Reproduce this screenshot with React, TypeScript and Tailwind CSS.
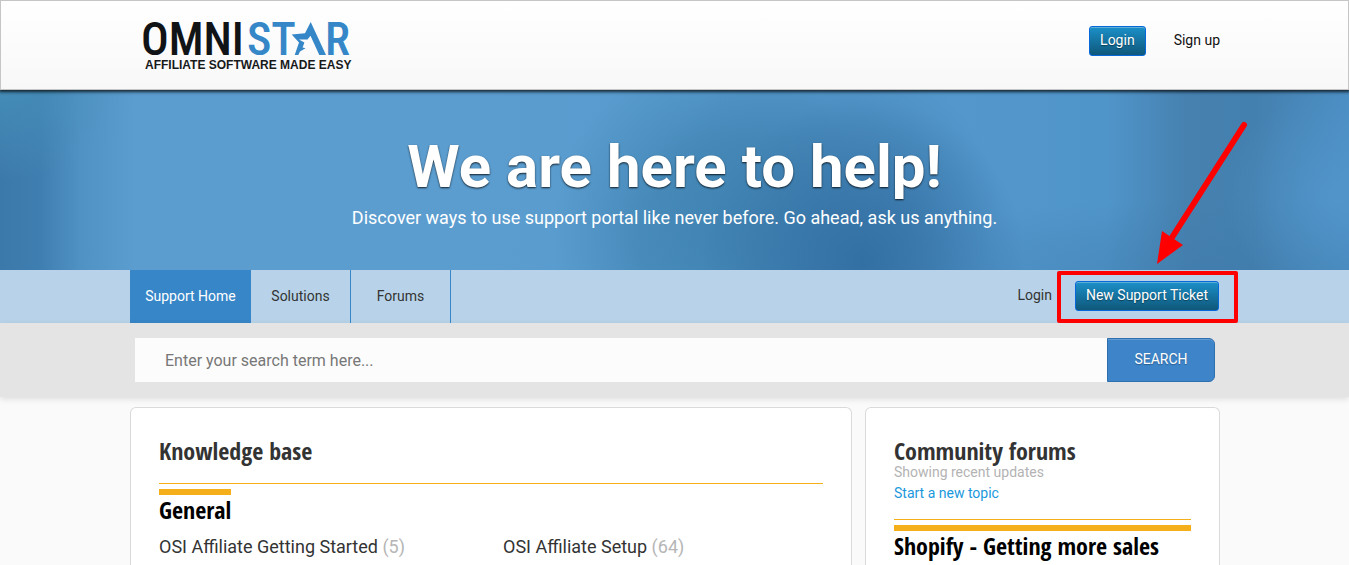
import type { ReactNode } from "react";

const tealButton =
  "block h-[30px] rounded-[3px] border border-[#0769d9] bg-linear-to-b from-[#1b90c9] to-[#0f587b] px-2.5 pb-0.5 text-sm leading-[24px] text-white shadow-[inset_0_1px_0_rgba(255,255,255,0.3)] text-shadow-[0_1px_1px_rgba(0,0,0,0.4)]";

function Container({ children, className = "" }: { children: ReactNode; className?: string }) {
  return <div className={`mx-auto w-full max-w-[1091px] pl-px ${className}`}>{children}</div>;
}

function Logo() {
  return (
    <svg viewBox="0 0 214 72" className="h-[72px] w-[214px]" role="img" aria-label="Omnistar">
      <g fontFamily="'Roboto Condensed', 'Liberation Sans', sans-serif" fontSize="46" fontWeight="500">
        <text x="-1" y="46" fill="#111416">OMNI</text>
        <text x="105" y="46" fill="#3687c8">ST</text>
        <text x="183" y="46" fill="#3687c8">R</text>
      </g>
      <path
        d="M149.7 25.5 163 24.2 168.7 13 184 46H177.3L168.5 26.8 165.5 30.5 157 30.5 162.4 33.6 160.6 38.4 163.5 39.2 158 42.5 156.3 46H152.7L157 33.4Z"
        fill="#3687c8"
      />
      <text
        x="3"
        y="60"
        fill="#17191b"
        fontFamily="'Liberation Sans', Arial, sans-serif"
        fontSize="12"
        fontWeight="700"
      >
        AFFILIATE SOFTWARE MADE EASY
      </text>
    </svg>
  );
}

function Header() {
  return (
    <header className="relative z-10 border border-[#c6c6c6] bg-linear-to-b from-white to-[#f8f8f8] shadow-[0_1px_3px_1px_rgba(0,0,0,0.75)]">
      <Container className="flex h-[88px] items-center justify-between">
        <a href="#home" className="ml-3">
          <Logo />
        </a>
        <div className="mb-2 flex items-center gap-7">
          <button type="button" className={tealButton}>Login</button>
          <a href="#signup" className="pb-0.5 text-sm text-[#111]">Sign up</a>
        </div>
      </Container>
    </header>
  );
}

function Hero() {
  return (
    <section className="flex flex-col items-center bg-[radial-gradient(ellipse_10%_50%_at_0%_0%,rgba(72,148,188,0.7)_0%,transparent_100%),linear-gradient(90deg,#3c79ab_0%,#3f7eb0_3%,rgba(70,135,185,0.5)_6%,transparent_10%),radial-gradient(ellipse_12%_90%_at_64%_95%,rgba(48,108,160,0.9)_0%,rgba(52,112,164,0.6)_45%,transparent_100%),radial-gradient(ellipse_12%_100%_at_53%_80%,rgba(62,130,176,0.8)_0%,rgba(62,130,176,0.65)_45%,transparent_100%),radial-gradient(ellipse_13%_85%_at_61%_65%,rgba(62,126,174,0.7)_0%,rgba(62,126,174,0.5)_50%,transparent_100%),radial-gradient(ellipse_8%_60%_at_99%_60%,rgba(84,152,206,0.7)_0%,transparent_100%),radial-gradient(ellipse_25%_40%_at_90%_100%,rgba(62,122,170,0.5)_0%,transparent_100%),linear-gradient(90deg,#5b9dcf_35%,#5296cb_75%,#5095ca_82%,#4681b0_88%,#4480af_93%,#4c8fc4_100%)] px-4 pt-[41px] pb-[39px] text-white">
      <h1 className="text-center text-[60px] leading-[72px] font-bold text-shadow-[0_1px_2px_rgba(0,0,0,0.8)]">
        We are here to help!
      </h1>
      <p className="mt-0.5 text-center text-[18px] leading-[26px]">
        Discover ways to use support portal like never before. Go ahead, ask us anything.
      </p>
    </section>
  );
}

function TicketCallout() {
  return (
    <>
      <div className="pointer-events-none absolute -top-[10px] -right-[19px] -bottom-[12px] -left-[18px] rounded-[2px] border-4 border-[#fe0000]" />
      <svg
        viewBox="0 0 100 150"
        className="pointer-events-none absolute bottom-[44px] left-[78px] h-[150px] w-[100px]"
        aria-hidden="true"
      >
        <path d="M91 8 18 122" stroke="#fe0000" strokeWidth="6" strokeLinecap="round" />
        <path d="M9 114 30 128 4 147Z" fill="#fe0000" />
      </svg>
    </>
  );
}

function NavBar() {
  return (
    <div className="bg-[#b8d3e9]">
      <Container className="flex items-center justify-between">
        <nav className="flex text-sm leading-[53px] text-[#333]">
          <a href="#support" className="w-[121px] bg-[#3786c7] text-center text-white">Support Home</a>
          <a href="#solutions" className="w-[100px] border-r border-[#3786c7] text-center">Solutions</a>
          <a href="#forums" className="w-[100px] border-r border-[#3786c7] text-center">Forums</a>
        </nav>
        <div className="mb-px flex items-center gap-[23px] pr-px">
          <a href="#login" className="pb-0.5 text-sm leading-5 text-[#333]">Login</a>
          <div className="relative">
            <button type="button" className={tealButton}>New Support Ticket</button>
            <TicketCallout />
          </div>
        </div>
      </Container>
    </div>
  );
}

function SearchBar() {
  return (
    <div className="bg-[#e4e4e4] py-[15px] shadow-[0_2px_6px_rgba(0,0,0,0.12)]">
      <Container>
        <form className="mx-[5px] flex" onSubmit={(e) => e.preventDefault()}>
          <input
            type="text"
            aria-label="Search"
            placeholder="Enter your search term here..."
            className="h-11 min-w-0 flex-1 bg-[#fcfcfc] px-[30px] text-base text-[#333] outline-none placeholder:text-[#777]"
          />
          <button
            type="submit"
            className="h-11 w-[108px] rounded-r-md border border-[#2e6fae] bg-[#3d84c9] pb-0.5 text-sm text-white shadow-[inset_0_1px_0_rgba(255,255,255,0.2)] text-shadow-[0_1px_1px_rgba(0,0,0,0.3)]"
          >
            SEARCH
          </button>
        </form>
      </Container>
    </div>
  );
}

const condensed = "font-['Open_Sans_Condensed','Roboto_Condensed',sans-serif] text-2xl leading-6 font-bold";

function Panel({ children }: { children: ReactNode }) {
  return (
    <section className="rounded-t-md border border-b-0 border-[#dadada] bg-white px-7 pt-[31px]">
      {children}
    </section>
  );
}

function TopicLink({ title, count }: { title: string; count: number }) {
  return (
    <a href="#topic" className="text-[18px] leading-[26px] text-[#333]">
      {title} <span className="text-[#b6b6b6]">({count})</span>
    </a>
  );
}

export default function App() {
  return (
    <div className="flex min-h-screen flex-col bg-[#fafafa] font-['Roboto','Liberation_Sans',sans-serif]">
      <Header />
      <Hero />
      <NavBar />
      <SearchBar />
      <main className="flex flex-1 flex-col">
        <Container className="grid flex-1 grid-cols-[722fr_355fr] gap-[13px] pt-[10px]">
          <Panel>
            <h2 className={`${condensed} text-[#333]`}>Knowledge base</h2>
            <div className="mt-5 border-t border-[#f4af1b] pt-[5px]">
              <h3 className={`${condensed} inline-block border-t-[6px] border-[#f4af1b] pt-[3px] align-top text-black`}>
                General
              </h3>
              <div className="mt-3 grid grid-cols-2 gap-6">
                <TopicLink title="OSI Affiliate Getting Started" count={5} />
                <TopicLink title="OSI Affiliate Setup" count={64} />
              </div>
            </div>
          </Panel>
          <Panel>
            <h2 className={`${condensed} text-[#333]`}>Community forums</h2>
            <p className="text-sm leading-[18px] text-[#b3b3b3]">Showing recent updates</p>
            <a href="#new-topic" className="mt-0.5 block text-sm leading-5 text-[#1b98dc]">Start a new topic</a>
            <div className="mt-4 border-t border-[#f4af1b] pt-[5px]">
              <h3 className={`${condensed} border-t-[6px] border-[#f4af1b] pt-[3px] text-black`}>
                Shopify - Getting more sales
              </h3>
            </div>
          </Panel>
        </Container>
      </main>
    </div>
  );
}
